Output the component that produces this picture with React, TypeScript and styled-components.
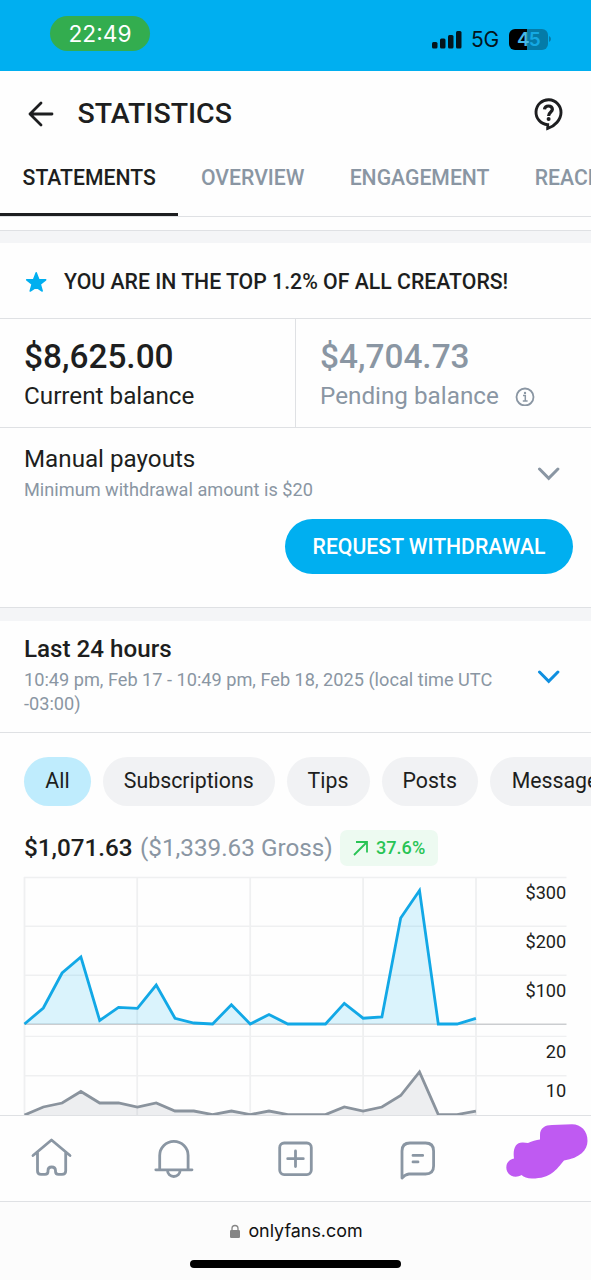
import React from 'react';
import styled, { createGlobalStyle } from 'styled-components';

const Global = createGlobalStyle`
  * { box-sizing: border-box; }
  body { margin: 0; background: #fefefe; font-family: Roboto, "Liberation Sans", sans-serif; color: #1d1e20; }
`;

const brand = '#00aff0';
const muted = '#8a96a3';
const line = '#dfe1e4';

const Page = styled.div`
  width: 591px; height: 1280px; overflow: hidden; display: flex; flex-direction: column; background: #fefefe;
`;
const StatusBar = styled.div`
  height: 71px; flex: none; background: ${brand}; display: flex; justify-content: space-between; padding: 16px 40px 0 50px;
  font-family: Inter, "Liberation Sans", sans-serif;
`;
const TimePill = styled.div`
  width: 100px; height: 35px; border-radius: 18px; background: #33ad4f; color: #fff; font-size: 22.7px; line-height: 36px; text-align: center;
`;
const Signals = styled.div`
  display: flex; height: 22px; margin-top: 12px; align-items: center; color: #04141c;
`;
const Network = styled.span`
  font-size: 21px; line-height: 22px; margin: 0 9px 0 9px; padding-top: 2px; width: 29px; white-space: nowrap; letter-spacing: -0.3px;
`;
const Battery = styled.div`
  width: 39px; height: 21px; border-radius: 6px; display: flex; justify-content: center; align-items: center;
  background: linear-gradient(90deg, #000 0 18px, #047ba8 18px); font-size: 19px; font-weight: 600; line-height: 21px; letter-spacing: -0.8px;
`;
const Digit = styled.span<{ $c: string }>`color: ${p => p.$c};`;

const Header = styled.header`
  height: 85px; flex: none; display: flex; align-items: center; padding: 0 27px 0 25.5px;
`;
const Title = styled.h1`
  margin: 0 auto 0 22px; font-size: 28.5px; line-height: 34px; font-weight: 500;
`;
const Tabs = styled.nav`
  height: 61px; flex: none; display: flex; border-bottom: 1px solid ${line}; overflow: hidden;
`;
const Tab = styled.div<{ $on?: boolean }>`
  flex: none; height: 60px; padding: 10px 22.6px 0; font-size: 21.2px; line-height: 24px; font-weight: 500;
  color: ${p => (p.$on ? '#1d1e20' : muted)}; border-bottom: ${p => (p.$on ? '3px solid #1d1e20' : '0')};
`;
const Gap = styled.div<{ $top: number; $h: number }>`
  height: ${p => p.$h}px; margin-top: ${p => p.$top}px; flex: none; background: #f4f5f7; border-top: 1px solid ${line};
`;
const Rank = styled.div`
  height: 76px; flex: none; display: flex; align-items: center; padding: 2px 24px 0; gap: 16px; font-size: 21.25px; font-weight: 500;
  border-bottom: 1px solid ${line}; white-space: nowrap;
`;
const Balances = styled.div`
  height: 109px; flex: none; display: flex; border-bottom: 1px solid ${line};
`;
const Balance = styled.div<{ $muted?: boolean }>`
  width: ${p => (p.$muted ? 295 : 296)}px; padding: 18px 24px 0; color: ${p => (p.$muted ? muted : '#1d1e20')};
  border-right: ${p => (p.$muted ? '0' : `1px solid ${line}`)};
`;
const Amount = styled.div`font-size: 33.4px; line-height: 40px; font-weight: 500; white-space: nowrap;`;
const Label = styled.div`
  display: flex; align-items: center; gap: 16.5px; font-size: 24.25px; line-height: 30px; margin-top: 4px; white-space: nowrap;
`;
const Row = styled.div`display: flex; justify-content: space-between; padding: 0 31px 0 24px;`;
const Payouts = styled.section`height: 179px; flex: none; padding-top: 16px;`;
const Period = styled.section`height: 112px; flex: none; padding-top: 13px; border-bottom: 1px solid ${line};`;
const Heading = styled.div<{ $bold?: boolean }>`
  font-size: 24.2px; line-height: 30px; font-weight: ${p => (p.$bold ? 500 : 400)};
`;
const Sub = styled.div`font-size: 18.16px; line-height: 24px; margin-top: 4px; color: ${muted};`;
const Chevron = styled.svg<{ $top: number }>`margin-top: ${p => p.$top}px; flex: none;`;
const Action = styled.button`
  display: block; width: 288px; height: 55px; margin: 17px 18px 0 auto; border: 0; border-radius: 28px; background: ${brand};
  color: #fff; font: 500 21.2px/52px Roboto, sans-serif; padding: 0; white-space: nowrap;
`;
const Chips = styled.div`height: 73px; flex: none; display: flex; gap: 12px; padding: 24px 0 0 24px; overflow: hidden;`;
const Chip = styled.div<{ $on?: boolean; $w: number }>`
  flex: none; width: ${p => p.$w}px; height: 49px; border-radius: 25px; text-align: center; font-size: 21.3px; line-height: 47px;
  background: ${p => (p.$on ? '#bfecfd' : '#f1f2f4')}; white-space: nowrap;
`;
const Totals = styled.div`
  height: 60px; flex: none; display: flex; align-items: center; padding: 24px 0 0 24px; font-size: 24.25px; line-height: 36px; white-space: nowrap;
`;
const Net = styled.span`font-weight: 500; width: 116px;`;
const Gross = styled.span`color: ${muted}; width: 200px;`;
const Growth = styled.span`
  display: flex; align-items: center; gap: 8px; width: 98px; height: 36px; padding-left: 13px; border-radius: 7px;
  background: #edfaf1; color: #28c455; font-size: 18.1px; font-weight: 500;
`;
const ChartBox = styled.div`height: 249px; flex: none; overflow: hidden;
  svg { display: block; } text { font-family: Roboto, sans-serif; font-size: 18.2px; fill: #1d1e20; text-anchor: end; }`;
const BottomNav = styled.nav`
  height: 87px; flex: none; border-top: 1px solid ${line}; border-bottom: 1px solid ${line}; background: #fefefe;
  display: flex; align-items: center; padding: 1px 0 0 27px; gap: 72px;
`;
const NavIcon = styled.svg`
  flex: none; fill: none; stroke: ${muted}; stroke-width: 2.8; stroke-linecap: round; stroke-linejoin: round;
`;
const Scribble = styled.svg`flex: none; margin: -19px 0 0 -12px;`;
const Browser = styled.footer`
  height: 78px; flex: none; display: flex; flex-direction: column; align-items: center; background: #fcfcfc; padding-top: 17px;
`;
const Address = styled.div`
  display: flex; align-items: center; gap: 8px; margin-left: 2px; font: 17.9px/24px Inter, "Liberation Sans", sans-serif; color: #111;
`;
const HomeBar = styled.div`width: 211px; height: 8px; margin-top: 17px; border-radius: 4px; background: #000;`;

const step = 18.81;
const baseline = 1024;
const money = [1024, 1008, 973, 957, 1020.5, 1007.3, 1008.3, 985, 1018.3, 1023, 1024, 1004.7, 1024, 1014.5, 1024, 1024, 1024, 1003.4, 1018.2, 1017, 918, 890.5, 1024, 1024, 1018.3];
const counts = [1115, 1107, 1103, 1091.5, 1103, 1103, 1107, 1103, 1111, 1111, 1114.6, 1111, 1114.6, 1111, 1114.6, 1114.6, 1114.6, 1107, 1111, 1107, 1095.5, 1072, 1114.6, 1114.6, 1111];
const toPath = (v: number[]) => v.map((y, i) => `${i ? 'L' : 'M'}${(24.5 + i * step).toFixed(1)} ${y}`).join(' ');

const Arrow = ({ color, top }: { color: string; top: number }) => (
  <Chevron $top={top} width="24" height="16" viewBox="0 0 24 16" fill="none" stroke={color} strokeWidth="3" strokeLinecap="round" strokeLinejoin="miter">
    <path d="M3.5 3l9.200 9.300L21.900 3" />
  </Chevron>
);

const Chart = () => (
  <ChartBox>
    <svg width="591" height="249" viewBox="0 866 591 249">
      <g stroke="#eff0f1" strokeWidth="1.4" fill="none">
        {[877.5, 926.2, 975.3, 1036.4, 1075.8].map(y => <path key={y} d={`M24 ${y}H566.5`} />)}
        {[24.5, 137.2, 250.2, 363.1, 476].map(x => <path key={x} strokeWidth="1.8" d={`M${x} 877V1115`} />)}
      </g>
      <path d={`M24 ${baseline + 0.3}H566.5`} stroke="#cbcdd0" strokeWidth="1.5" />
      <path d={`${toPath(money)}V${baseline}H24.5Z`} fill={brand} fillOpacity=".14" />
      <path d={toPath(money)} fill="none" stroke="#12a8e6" strokeWidth="2.8" />
      <path d={`${toPath(counts)}V1115H24.5Z`} fill={muted} fillOpacity=".15" />
      <path d={toPath(counts)} fill="none" stroke="#8a939d" strokeWidth="2.8" />
      <text x="566.3" y="899">$300</text>
      <text x="566.3" y="948">$200</text>
      <text x="566.3" y="997">$100</text>
      <text x="566.3" y="1058">20</text>
      <text x="566.3" y="1097">10</text>
    </svg>
  </ChartBox>
);

export default function App() {
  return (
    <Page>
      <Global />
      <StatusBar>
        <TimePill>22:49</TimePill>
        <Signals>
          <svg width="31" height="20" viewBox="0 0 31 20" fill="#04141c">
            <rect x="1" y="13" width="5.5" height="6.5" rx="1.5" />
            <rect x="9" y="9.5" width="5.5" height="10" rx="1.5" />
            <rect x="17" y="6" width="5.5" height="13.5" rx="1.5" />
            <rect x="25" y="2" width="5.5" height="17.5" rx="1.5" />
          </svg>
          <Network>5G</Network>
          <Battery><Digit $c="#45b9e8">4</Digit><Digit $c="#14a9e3">5</Digit></Battery>
          <svg width="3" height="8" viewBox="0 0 3 8"><path d="M1 1Q3 2 3 4T1 7Z" fill="#047ba8" /></svg>
        </Signals>
      </StatusBar>
      <Header>
        <svg width="30" height="30" viewBox="26 99 30 30" fill="none" stroke="#1d1e20" strokeWidth="2.8" strokeLinecap="round" strokeLinejoin="round">
          <path d="M52 114H30M41 103L30 114l11 11" />
        </svg>
        <Title>STATISTICS</Title>
        <svg width="32" height="34" viewBox="532 97 32 34" fill="none" stroke="#1d1e20" strokeWidth="2.9" strokeLinecap="round">
          <path strokeLinejoin="miter" d="M547.7 124.7V128.5C555 126 561 119.500 561 112.500A12.500 12.500 0 1 0 547.700 124.700Z" />
          <path strokeWidth="3.2" strokeLinecap="butt" d="M544.5 109.300Q544.800 106 548.500 106T552.400 109.300C552.400 112 548.600 112 548.600 116" />
          <circle cx="548.6" cy="118.9" r="2" fill="#1d1e20" stroke="none" />
        </svg>
      </Header>
      <Tabs>
        <Tab $on>STATEMENTS</Tab>
        <Tab>OVERVIEW</Tab>
        <Tab>ENGAGEMENT</Tab>
        <Tab>REACH</Tab>
      </Tabs>
      <Gap $top={13} $h={13} />
      <Rank>
        <svg width="24" height="24" viewBox="0 0 24 24" fill={brand} stroke={brand} strokeWidth="1.5" strokeLinejoin="round">
          <path d="M12.2 2.800L14.800 9.500L21.700 9.800L16.300 14.200L18.200 21L12.200 17.200L6.200 21L8.100 14.200L2.700 9.800L9.600 9.500Z" />
        </svg>
        YOU ARE IN THE TOP 1.2% OF ALL CREATORS!
      </Rank>
      <Balances>
        <Balance>
          <Amount>$8,625.00</Amount>
          <Label>Current balance</Label>
        </Balance>
        <Balance $muted>
          <Amount>$4,704.73</Amount>
          <Label>
            Pending balance
            <svg width="20" height="20" viewBox="0 0 20 20" fill="none" stroke={muted} strokeWidth="1.8">
              <circle cx="10" cy="11" r="8.5" />
              <path d="M8 9.500H10.300V15M7.800 15H12.600" strokeWidth="1.5" />
              <circle cx="10" cy="6.9" r="1.2" fill={muted} stroke="none" />
            </svg>
          </Label>
        </Balance>
      </Balances>
      <Payouts>
        <Row>
          <div>
            <Heading>Manual payouts</Heading>
            <Sub>Minimum withdrawal amount is $20</Sub>
          </div>
          <Arrow color={muted} top={22} />
        </Row>
        <Action>REQUEST WITHDRAWAL</Action>
      </Payouts>
      <Gap $top={0} $h={14} />
      <Period>
        <Row>
          <div>
            <Heading $bold>Last 24 hours</Heading>
            <Sub>10:49 pm, Feb 17 - 10:49 pm, Feb 18, 2025 (local time UTC<br />-03:00)</Sub>
          </div>
          <Arrow color="#0f8fe0" top={35} />
        </Row>
      </Period>
      <Chips>
        <Chip $on $w={67}>All</Chip>
        <Chip $w={171.5}>Subscriptions</Chip>
        <Chip $w={83}>Tips</Chip>
        <Chip $w={96.5}>Posts</Chip>
        <Chip $w={141}>Messages</Chip>
      </Chips>
      <Totals>
        <Net>$1,071.63</Net>
        <Gross>($1,339.63 Gross)</Gross>
        <Growth>
          <svg width="15" height="16" viewBox="0 0 15 16" fill="none" stroke="#28c455" strokeWidth="1.8">
            <path d="M1 15L14 2M3 2H14V12.500" />
          </svg>
          37.6%
        </Growth>
      </Totals>
      <Chart />
      <BottomNav>
        <NavIcon width="50" height="50" viewBox="27 1134 50 50">
          <path d="M33 1155.500L51.500 1140L70 1155.500M37.500 1152.500V1171Q37.500 1174.300 41 1174.300H45Q48 1174.300 48 1171.500V1170.500Q48 1167 51.700 1167T55.500 1170.500V1171.500Q55.500 1174.300 58.500 1174.300H62Q65.700 1174.300 65.700 1171V1152.500" />
        </NavIcon>
        <NavIcon width="50" height="50" viewBox="149 1134 50 50">
          <path d="M155.800 1169.800H192M159.700 1169V1155.500A14.200 14.200 0 0 1 188.100 1155.500V1169M167.500 1170.500A6.300 6 0 0 0 180.100 1170.500" />
        </NavIcon>
        <NavIcon width="50" height="50" viewBox="271 1134 50 50">
          <rect x="279.7" y="1143" width="31.6" height="31.6" rx="4.5" />
          <path d="M295.500 1151V1166.500M287.700 1158.700H303.300" />
        </NavIcon>
        <NavIcon width="50" height="50" viewBox="393 1134 50 50">
          <path d="M402 1178V1151Q402 1143 410 1143H425.500Q433.600 1143 433.600 1151V1166Q433.600 1174 425.500 1174H409Q405 1174.500 402 1178M413 1155.400H422.700M413 1161.900H418" />
        </NavIcon>
        <Scribble width="86" height="60" viewBox="503 1120 86 60">
          <path fill="#bf5af2" d="M540 1139.500V1135C540 1128 545 1125 552 1125L572 1124.300C581 1124.300 587.500 1131 587.500 1141C587.500 1150 580 1158 564 1160.500C556 1170 551 1178.500 532 1178.500C527 1178.500 524 1177 521.500 1175C515 1179 506.300 1175.500 506.300 1167.500C506.300 1162 510 1159.500 514 1158.500C512.500 1148 516 1142 523 1142.500L528 1143C532 1141 536 1140 540 1139.500Z" />
        </Scribble>
      </BottomNav>
      <Browser>
        <Address>
          <svg width="10" height="15" viewBox="0 0 10 15"><rect y="6" width="10" height="8" rx="1.3" fill="#858585" /><path d="M2 7V4.500a3 3 0 0 1 6 0V7" fill="none" stroke="#858585" strokeWidth="1.3" /></svg>
          onlyfans.com
        </Address>
        <HomeBar />
      </Browser>
    </Page>
  );
}
